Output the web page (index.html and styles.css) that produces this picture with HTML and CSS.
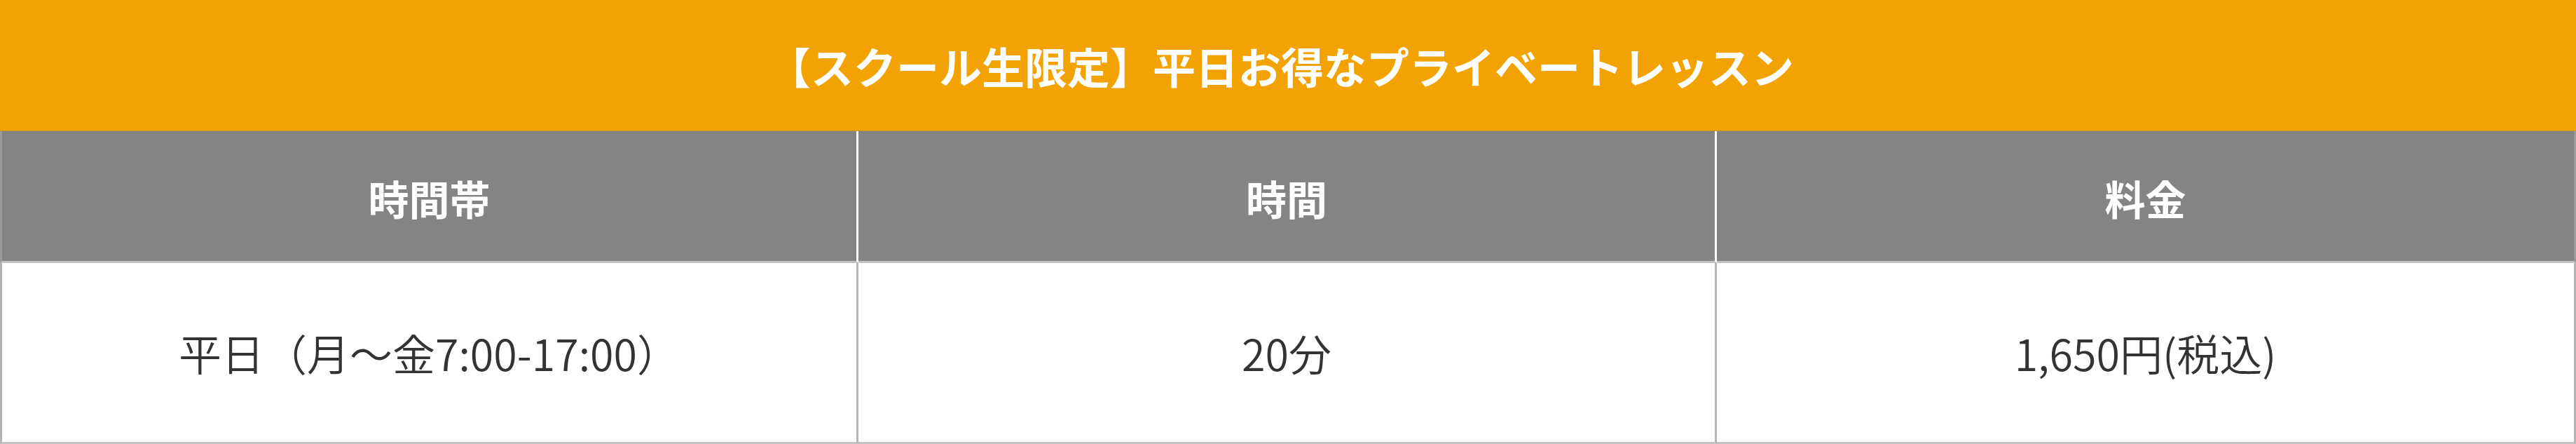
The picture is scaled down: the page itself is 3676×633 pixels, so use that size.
FILE: index.html
```html
<!DOCTYPE html>
<html lang="ja">
<head>
<meta charset="utf-8">
<link rel="stylesheet" href="styles.css">
</head>
<body>
<div class="plan">
  <div class="plan-title">【スクール生限定】平日お得なプライベートレッスン</div>
  <div class="plan-grid">
    <div class="cell head first">時間帯</div>
    <div class="cell head">時間</div>
    <div class="cell head last">料金</div>
    <div class="cell body first">平日（月～金7:00-17:00）</div>
    <div class="cell body">20分</div>
    <div class="cell body last">1,650円(税込)</div>
  </div>
</div>
</body>
</html>
```
FILE: styles.css
```css
html, body {
  margin: 0;
  padding: 0;
  background: #ffffff;
}
body {
  font-family: "Noto Sans CJK JP", "Noto Sans", sans-serif;
}
.plan {
  width: 3676px;
}
.plan-title {
  height: 187px;
  background: #f3a204;
  color: #ffffff;
  font-weight: 700;
  font-size: 61px;
  display: flex;
  align-items: center;
  justify-content: center;
  box-sizing: border-box;
  border-bottom: 1px solid #c9951c;
  padding-right: 20px;
}
.plan-grid {
  display: grid;
  grid-template-columns: 1225px 1225px 1226px;
  grid-template-rows: 188px 258px;
}
.cell {
  display: flex;
  align-items: center;
  justify-content: center;
  box-sizing: border-box;
}
.head {
  background: #848484;
  color: #ffffff;
  font-weight: 700;
  font-size: 58px;
  border-bottom: 3px solid #c3c3c3;
  border-right: 3px solid #ffffff;
  padding-top: 4px;
}
.head.first {
  border-left: 3px solid #9a9a9a;
}
.head.last {
  border-right: 3px solid #9a9a9a;
}
.body {
  color: #333333;
  font-size: 61px;
  font-weight: 350;
  border-right: 3px solid #b4b4b4;
  border-bottom: 3px solid #c3c3c3;
}
.body.first {
  border-left: 3px solid #b4b4b4;
}
```
